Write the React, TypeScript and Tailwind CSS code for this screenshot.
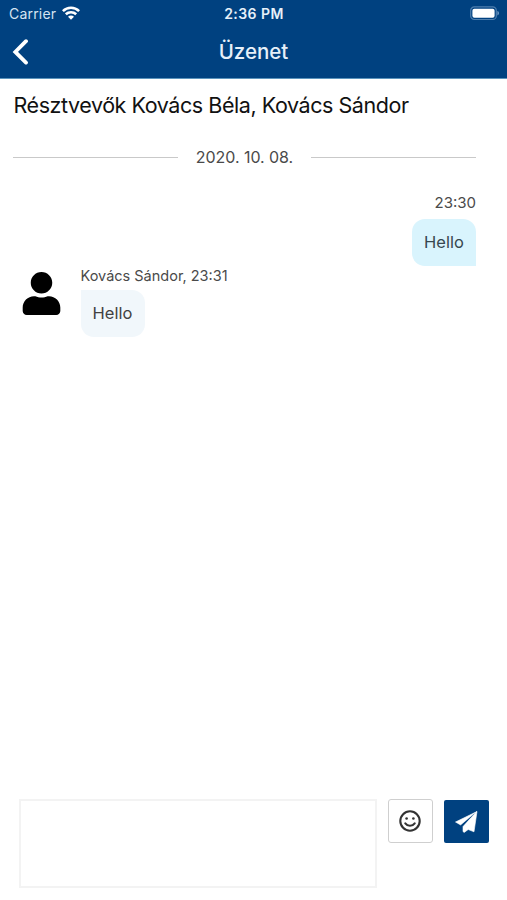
import React, { useState } from "react";
import { FaUser } from "react-icons/fa";

interface Message {
    id: number;
    sender: string | null;
    time: string;
    text: string;
}

const participants = ["Kovács Béla", "Kovács Sándor"];

const messages: Message[] = [
    { id: 1, sender: null, time: "23:30", text: "Hello" },
    { id: 2, sender: "Kovács Sándor", time: "23:31", text: "Hello" },
];

function StatusBar() {
    return (
        <div className="grid grid-cols-3 items-center h-[27px] pl-[9px] pr-[8px]">
            <div className="flex items-center gap-[6px]">
                <span className="text-[14px] leading-none tracking-[0.2px] text-[#d5e4f2]">Carrier</span>
                <svg className="-mt-[2px]" width="18" height="14" viewBox="0 0 18 14" fill="none" stroke="white" strokeWidth="2.6">
                    <path d="M0.9 5.1C5.5 0.6 12.5 0.6 17.1 5.1" />
                    <path d="M3.8 8.3C6.8 5.5 11.2 5.5 14.2 8.3" />
                    <path d="M9 13.8L6 10.8C7.7 9.2 10.3 9.2 12 10.8Z" fill="white" stroke="none" />
                </svg>
            </div>
            <span className="pt-px text-center text-[14px] leading-none font-semibold tracking-[0.45px] text-[#e6f0f9]">2:36 PM</span>
            <svg className="justify-self-end" width="29" height="15" viewBox="0 0 29 15">
                <rect x="0.7" y="0.9" width="25.6" height="12.6" rx="3.6" fill="none" stroke="#4f7fae" strokeWidth="1.2" />
                <rect x="2.4" y="2.7" width="22.2" height="9" rx="2" fill="white" />
                <path d="M27.4 5v4.4c1-.3 1.6-1.2 1.6-2.2s-.6-1.9-1.6-2.2z" fill="#6e98c2" />
            </svg>
        </div>
    );
}

function Header() {
    return (
        <header className="h-[79px] bg-[#004180] border-b border-[#5b94bd]">
            <StatusBar />
            <div className="grid grid-cols-3 items-center h-[50px]">
                <button className="pl-[12px]" aria-label="Vissza">
                    <svg width="17" height="26" viewBox="0 0 17 26" fill="none" stroke="white" strokeWidth="3.8" strokeLinecap="round" strokeLinejoin="miter">
                        <path d="M14 2.2L3.3 12.9L14 23.6" />
                    </svg>
                </button>
                <h1 className="pt-px text-center text-[20.5px] leading-none font-medium text-[#e6f0f9]">Üzenet</h1>
            </div>
        </header>
    );
}

function DateDivider({ date }: { date: string }) {
    return (
        <div className="flex items-center h-5 ml-[13px] mr-[31px]">
            <div className="flex-1 h-px bg-[#c9c9c9]" />
            <span className="w-[133px] text-center text-[16px] leading-5 tracking-[-0.05px] text-[#4a4a4a]">{date}</span>
            <div className="flex-1 h-px bg-[#c9c9c9]" />
        </div>
    );
}

function OwnMessage({ message }: { message: Message }) {
    return (
        <div className="flex flex-col items-end pr-[31px]">
            <span className="pt-px text-[15px] leading-5 text-[#4a4a4a]">{message.time}</span>
            <div className="mt-[6px] w-[64px] h-[47px] flex items-center justify-center bg-[#d9f4fd] rounded-[13px] rounded-br-none text-[16.5px] text-[#37474f]">
                {message.text}
            </div>
        </div>
    );
}

function OtherMessage({ message }: { message: Message }) {
    return (
        <div className="flex items-start pl-[20px]">
            <FaUser className="mt-[6px] w-[43px] h-[43px] shrink-0 text-black" />
            <div className="ml-[17.5px]">
                <div className="text-[14.5px] leading-5 text-[#4a4a4a]">
                    <span className="whitespace-nowrap">{message.sender}, {message.time}</span>
                </div>
                <div className="mt-[4px] w-[64px] h-[47px] flex items-center justify-center bg-[#f1f7fb] rounded-[13px] rounded-tl-none text-[16.5px] text-[#424242]">
                    {message.text}
                </div>
            </div>
        </div>
    );
}

function SmileIcon() {
    return (
        <svg width="22" height="22" viewBox="0 0 22 22" fill="none" stroke="#333333" strokeWidth="2.1" strokeLinecap="round">
            <circle cx="11" cy="11" r="9.7" />
            <path d="M6.3 13.4C8.6 16.5 13.4 16.5 15.7 13.4" />
            <circle cx="7.6" cy="8.5" r="1.3" fill="#333333" stroke="none" />
            <circle cx="14.4" cy="8.5" r="1.3" fill="#333333" stroke="none" />
        </svg>
    );
}

function SendIcon() {
    return (
        <svg width="23" height="22" viewBox="0 0 23 22" fill="white" stroke="white" strokeWidth="0.6" strokeLinejoin="round">
            <path d="M22 0.5L0.5 11L5.6 13.9L18.2 3.2Z" />
            <path d="M22 0.5L19 20.8L13.2 18.5L9.2 21.4L8 20.6V15.6L18.9 3.6Z" />
        </svg>
    );
}

export default function App() {
    const [draft, setDraft] = useState("");

    return (
        <div className="flex flex-col w-[507px] h-[900px] overflow-hidden bg-white font-['Inter','Liberation_Sans',sans-serif]">
            <Header />
            <main className="flex-1 min-h-0 pt-[12px]">
                <p className="pl-[13.5px] text-[21.5px] leading-7 tracking-[-0.44px] whitespace-nowrap text-[#111111]">
                    Résztvevők {participants.join(", ")}
                </p>
                <div className="mt-[28px]">
                    <DateDivider date="2020. 10. 08." />
                </div>
                <div className="flex flex-col mt-[25px]">
                    {messages.map((message) =>
                        message.sender ? (
                            <OtherMessage key={message.id} message={message} />
                        ) : (
                            <OwnMessage key={message.id} message={message} />
                        )
                    )}
                </div>
            </main>
            <footer className="flex items-start h-[101px] pl-[19px] pr-[18px]">
                <textarea
                    value={draft}
                    onChange={(e) => setDraft(e.target.value)}
                    className="w-[358px] h-[89px] resize-none border-2 border-[#f3f3f3] bg-white p-2 outline-none"
                />
                <button className="ml-[11px] w-[45px] h-[44px] pr-px flex items-center justify-center border border-[#cfcfcf] rounded-[3px] bg-white" aria-label="Emoji">
                    <SmileIcon />
                </button>
                <button className="ml-[11px] mt-px w-[45px] h-[43px] flex items-center justify-center rounded-[2px] bg-[#004180]" aria-label="Küldés">
                    <SendIcon />
                </button>
            </footer>
        </div>
    );
}
